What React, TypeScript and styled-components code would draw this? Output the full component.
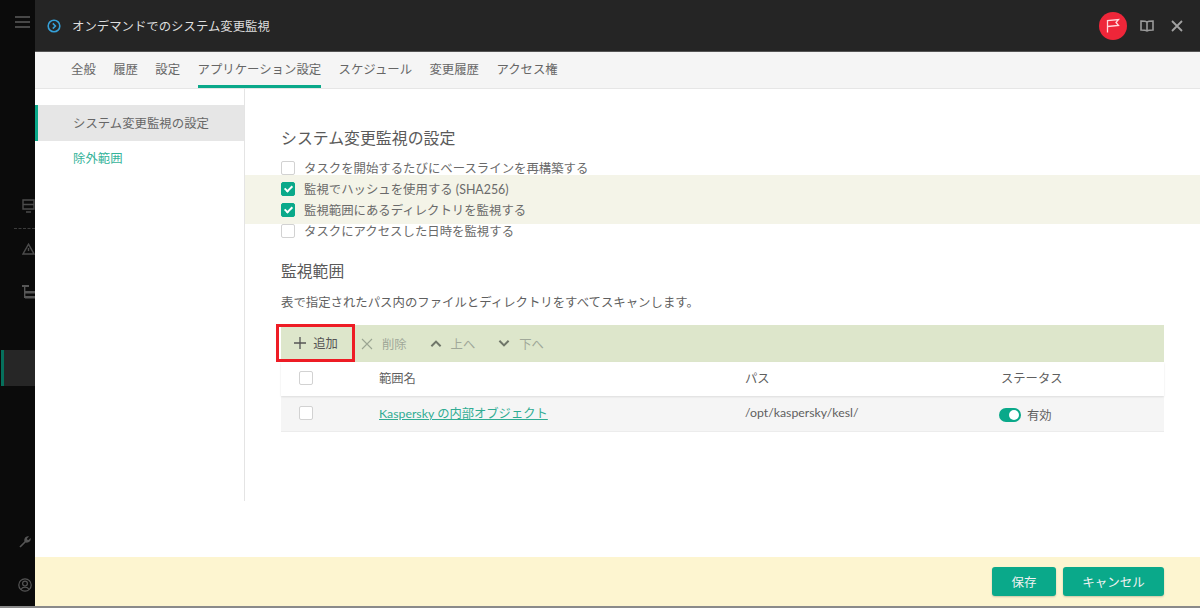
import styled, { createGlobalStyle } from 'styled-components';

const GlobalStyle = createGlobalStyle`
  html, body { margin: 0; padding: 0; height: 100%; background: #fff; overflow: hidden; }
  body { font-family: "Lato", "Noto Sans CJK JP", sans-serif; font-size: 12.4px; color: #5f5f5f; }
  #root { height: 100%; }
`;

const tabs = ['全般', '履歴', '設定', 'アプリケーション設定', 'スケジュール', '変更履歴', 'アクセス権'];

const options = [
  { label: 'タスクを開始するたびにベースラインを再構築する', on: false },
  { label: '監視でハッシュを使用する (SHA256)', on: true },
  { label: '監視範囲にあるディレクトリを監視する', on: true },
  { label: 'タスクにアクセスした日時を監視する', on: false },
];

const App = () => {
  return (
    <Shell>
      <GlobalStyle />
      <Rail>
        <RailIcon top={15} left={15}>
          <svg width="15" height="14" viewBox="0 0 15 14" fill="none" stroke="#5c5c5c" strokeWidth="1.5">
            <path d="M0 2h15M0 7h15M0 12h15" />
          </svg>
        </RailIcon>
        <RailIcon top={170} left={22}>
          <svg width="13" height="14" viewBox="0 0 13 14" fill="none" stroke="#4c4c4c" strokeWidth="1.4">
            <path d="M1 1h11v9H1zM1 5.500h11M4 13h5" />
          </svg>
        </RailIcon>
        <RailDivider />
        <RailIcon top={14} left={22}>
          <svg width="13" height="12" viewBox="0 0 13 12" fill="none" stroke="#4c4c4c" strokeWidth="1.4">
            <path d="M6.500 1.200 12 11H1zM6.500 5v3" />
          </svg>
        </RailIcon>
        <RailIcon top={30} left={22}>
          <svg width="13" height="14" viewBox="0 0 13 14" fill="#565656">
            <path d="M0 0h7v2H0zM2 2h1.400v11H2zM3 6h10v2.400H3zM3 11h10v2.400H3z" />
          </svg>
        </RailIcon>
        <RailActive />
        <RailSpacer />
        <RailIcon top={0} left={19}>
          <svg width="12" height="12" viewBox="0 0 12 12" fill="#555">
            <path d="M1.600 11.600.4 10.400l5-5C5 3.600 5.500 2 6.800 1 7.800.3 9 .1 10 .5L8 2.500 8.300 3.700 9.500 4 11.500 2c.4 1 .2 2.200-.6 3.200-1 1.200-2.600 1.700-4.300 1.300z" />
          </svg>
        </RailIcon>
        <RailIcon top={30} left={18}>
          <svg width="14" height="14" viewBox="0 0 14 14" fill="none" stroke="#555" strokeWidth="1.200">
            <circle cx="7" cy="7" r="6.200" />
            <circle cx="7" cy="5.600" r="2.400" />
            <path d="M2.900 11.500C3.800 9.800 5.200 9.200 7 9.200s3.200.6 4.100 2.300" />
          </svg>
        </RailIcon>
      </Rail>
      <Panel>
        <Header>
          <svg width="14" height="14" viewBox="0 0 14 14" fill="none" stroke="#35a0d8" strokeWidth="1.600">
            <circle cx="7" cy="7" r="5.800" />
            <path d="M5.800 4.400 8.400 7 5.800 9.600" />
          </svg>
          <HeaderTitle>オンデマンドでのシステム変更監視</HeaderTitle>
          <HeaderActions>
            <FlagBadge>
              <svg width="14" height="15" viewBox="0 0 14 15" fill="none" stroke="#ffd9dd" strokeWidth="1.300">
                <path d="M1.500 14.500V2.500L12.500 1.500 10 4.500l2.500 3-11 1" />
              </svg>
            </FlagBadge>
            <BookIcon>
              <svg width="14" height="12" viewBox="0 0 14 12" fill="none" stroke="#9a9a9a" strokeWidth="1.600">
                <path d="M7 2.200C6 1.200 4 1 1 1v9c3 0 5 .2 6 1 1-.8 3-1 6-1V1C10 1 8 1.200 7 2.200zM7 2.200V11" />
              </svg>
            </BookIcon>
            <svg width="12" height="12" viewBox="0 0 12 12" fill="none" stroke="#a2a2a2" strokeWidth="1.800">
              <path d="M1 1l10 10M11 1 1 11" />
            </svg>
          </HeaderActions>
        </Header>
        <TabBar>
          {tabs.map((tab) => (
            <Tab key={tab} active={tab === 'アプリケーション設定'}>{tab}</Tab>
          ))}
        </TabBar>
        <Body>
          <SideNav>
            <SideItem active>システム変更監視の設定</SideItem>
            <SideItem>除外範囲</SideItem>
          </SideNav>
          <Main>
            <SectionTitle>システム変更監視の設定</SectionTitle>
            <OptionList>
              <OptionRow>
                <Check />
                <span>{options[0].label}</span>
              </OptionRow>
              <OptionBand>
                {options.slice(1, 3).map((option) => (
                  <OptionRow key={option.label}>
                    <Check checked={option.on} />
                    <span>{option.label}</span>
                  </OptionRow>
                ))}
              </OptionBand>
              <OptionRow>
                <Check />
                <span>{options[3].label}</span>
              </OptionRow>
            </OptionList>
            <ScopeTitle>監視範囲</ScopeTitle>
            <Description>表で指定されたパス内のファイルとディレクトリをすべてスキャンします。</Description>
            <Toolbar>
              <AddButton>
                <svg width="14" height="14" viewBox="0 0 14 14" fill="none" stroke="#555" strokeWidth="1.300">
                  <path d="M7 1v12M1 7h12" />
                </svg>
                追加
              </AddButton>
              <ToolButton>
                <svg width="12" height="12" viewBox="0 0 12 12" fill="none" stroke="#9ba592" strokeWidth="1.100">
                  <path d="M1 1l10 10M11 1 1 11" />
                </svg>
                削除
              </ToolButton>
              <ToolButton>
                <svg width="12" height="9" viewBox="0 0 13 9" fill="none" stroke="#6f7669" strokeWidth="2.200">
                  <path d="M1.500 7.500 6.500 2.500l5 5" />
                </svg>
                上へ
              </ToolButton>
              <ToolButton>
                <svg width="12" height="9" viewBox="0 0 13 9" fill="none" stroke="#6f7669" strokeWidth="2.200">
                  <path d="M1.500 1.500 6.500 6.500l5-5" />
                </svg>
                下へ
              </ToolButton>
            </Toolbar>
            <Table>
              <HeadRow>
                <CheckCell><Check /></CheckCell>
                <span>範囲名</span>
                <span>パス</span>
                <span>ステータス</span>
              </HeadRow>
              <BodyRow>
                <CheckCell><Check /></CheckCell>
                <ScopeLink>Kaspersky の内部オブジェクト</ScopeLink>
                <span>/opt/kaspersky/kesl/</span>
                <Status>
                  <Toggle />
                  有効
                </Status>
              </BodyRow>
            </Table>
          </Main>
        </Body>
        <Footer>
          <PrimaryButton wide={false}>保存</PrimaryButton>
          <PrimaryButton wide>キャンセル</PrimaryButton>
        </Footer>
      </Panel>
    </Shell>
  );
};

export default App;

const Shell = styled.div`
  display: flex;
  height: 608px;
  width: 1200px;
  border-bottom: 2px solid #8a8a8a;
  box-sizing: border-box;
`;

const Rail = styled.aside`
  width: 35px;
  flex: none;
  background: #0b0b0b;
  display: flex;
  flex-direction: column;
  overflow: hidden;
  padding-bottom: 14px;
  box-sizing: border-box;
`;

const RailIcon = styled.div<{ top: number; left: number }>`
  margin-top: ${({ top }) => top}px;
  margin-left: ${({ left }) => left}px;
  display: flex;
  line-height: 0;
`;

const RailDivider = styled.div`
  margin: 15px 0 0 14px;
  border-top: 1px dashed #3c3c3c;
`;

const RailActive = styled.div`
  margin-top: 51px;
  height: 36px;
  background: #262626;
  border-left: 3px solid #06705c;
  margin-left: 1px;
`;

const RailSpacer = styled.div`
  flex: 1;
`;

const Panel = styled.div`
  flex: 1;
  min-width: 0;
  display: flex;
  flex-direction: column;
`;

const Header = styled.header`
  height: 52px;
  flex: none;
  background: #252525;
  border-bottom: 1px solid #555;
  box-sizing: border-box;
  display: flex;
  align-items: center;
  padding: 0 17px 0 12px;
`;

const HeaderTitle = styled.h1`
  margin: 0 0 0 11px;
  font-size: 12.4px;
  font-weight: 400;
  color: #dedede;
`;

const HeaderActions = styled.div`
  margin-left: auto;
  display: flex;
  align-items: center;
  gap: 17px;
`;

const FlagBadge = styled.div`
  width: 28px;
  height: 28px;
  border-radius: 50%;
  background: #ee2639;
  display: flex;
  align-items: center;
  justify-content: center;
`;

const BookIcon = styled.span`
  display: flex;
  margin-left: -4px;
`;

const TabBar = styled.nav`
  height: 37px;
  flex: none;
  background: #f5f5f5;
  border-bottom: 1px solid #e6e6e6;
  box-sizing: border-box;
  display: flex;
  gap: 17.400px;
  padding-left: 36px;
`;

const Tab = styled.div<{ active?: boolean }>`
  display: flex;
  align-items: center;
  height: 36px;
  box-sizing: border-box;
  padding-top: 1px;
  color: #666;
  border-bottom: 3px solid ${({ active }) => (active ? '#0aa98a' : 'transparent')};
`;

const Body = styled.div`
  flex: 1;
  min-height: 0;
  display: flex;
  align-items: flex-start;
`;

const SideNav = styled.div`
  width: 210px;
  height: 412px;
  flex: none;
  box-sizing: border-box;
  padding-top: 16px;
  border-right: 1px solid #e4e4e4;
`;

const SideItem = styled.div<{ active?: boolean }>`
  height: ${({ active }) => (active ? '36px' : '33px')};
  box-sizing: border-box;
  display: flex;
  align-items: center;
  padding-left: ${({ active }) => (active ? '35px' : '38px')};
  background: ${({ active }) => (active ? '#e6e6e6' : 'transparent')};
  border-left: ${({ active }) => (active ? '3px solid #0aa98a' : 'none')};
  color: ${({ active }) => (active ? '#666' : '#35b39a')};
`;

const Main = styled.main`
  flex: 1;
  min-width: 0;
  padding: 36px 36px 0;
`;

const SectionTitle = styled.h2`
  margin: 0;
  height: 26px;
  line-height: 26px;
  font-size: 15.900px;
  font-weight: 400;
  color: #5a5a5a;
`;

const OptionList = styled.div`
  margin-top: 6px;
`;

const OptionBand = styled.div`
  margin: -3.500px -36px;
  padding: 0 36px;
  background: #f4f4e8;
  height: 49px;
  display: flex;
  flex-direction: column;
  justify-content: center;
`;

const OptionRow = styled.div`
  height: 21px;
  display: flex;
  align-items: center;
  gap: 9px;
  color: #6a6a6a;
`;

const Check = styled.span<{ checked?: boolean }>`
  width: 14px;
  height: 14px;
  flex: none;
  border-radius: 2px;
  box-sizing: border-box;
  border: 1.5px solid ${({ checked }) => (checked ? '#0aa98a' : '#d2d2d2')};
  background: ${({ checked }) => (checked ? '#0aa98a' : '#fff')};
  position: relative;
  &::after {
    content: '';
    display: ${({ checked }) => (checked ? 'block' : 'none')};
    position: absolute;
    left: 3.500px;
    top: 1px;
    width: 3px;
    height: 6px;
    border: solid #fff;
    border-width: 0 2px 2px 0;
    transform: rotate(45deg);
  }
`;

const ScopeTitle = styled.h3`
  margin: 18px 0 0;
  height: 24px;
  line-height: 24px;
  font-size: 15.800px;
  font-weight: 400;
  color: #5a5a5a;
`;

const Description = styled.p`
  margin: 10px 0 0;
  height: 20px;
  line-height: 20px;
  color: #5f5f5f;
  font-size: 12.400px;
`;

const Toolbar = styled.div`
  margin: 12px 0 0;
  height: 37px;
  background: #dde6cb;
  display: flex;
  align-items: center;
  font-size: 12.300px;
`;

const AddButton = styled.div`
  margin: -1px 0 0 -5px;
  width: 79px;
  height: 38px;
  box-sizing: border-box;
  border: 3px solid #ee1c25;
  display: flex;
  align-items: center;
  justify-content: center;
  gap: 6px;
  color: #555;
`;

const ToolButton = styled.div`
  margin-left: 6px;
  padding: 0 8px 0 0;
  display: flex;
  align-items: center;
  gap: 9px;
  color: #a0a899;
  & + & {
    margin-left: 15px;
  }
`;

const Table = styled.div`
  font-size: 12.300px;
`;

const HeadRow = styled.div`
  height: 34px;
  padding-bottom: 2px;
  box-sizing: border-box;
  display: grid;
  grid-template-columns: 98px 366px 256px 1fr;
  align-items: center;
  background: #fff;
  box-shadow: 0 1px 2px rgba(0, 0, 0, 0.1);
  position: relative;
  color: #5f5f5f;
`;

const BodyRow = styled.div`
  height: 36px;
  padding-bottom: 2px;
  display: grid;
  grid-template-columns: 98px 366px 256px 1fr;
  align-items: center;
  background: #f5f5f5;
  border-bottom: 1px solid #ececec;
  box-sizing: border-box;
`;

const CheckCell = styled.div`
  padding-left: 18px;
  display: flex;
`;

const ScopeLink = styled.a`
  color: #30ac93;
  text-decoration: underline;
`;

const Status = styled.div`
  display: flex;
  align-items: center;
  gap: 6px;
  padding-top: 4px;
  margin-left: -2px;
`;

const Toggle = styled.span`
  width: 22px;
  height: 14px;
  border-radius: 7px;
  background: #0aa98a;
  position: relative;
  &::after {
    content: '';
    position: absolute;
    right: 2px;
    top: 2px;
    width: 10px;
    height: 10px;
    border-radius: 50%;
    background: #fff;
  }
`;

const Footer = styled.footer`
  height: 49px;
  flex: none;
  background: #fdf5d0;
  display: flex;
  align-items: center;
  justify-content: flex-end;
  gap: 7px;
  padding-right: 36px;
`;

const PrimaryButton = styled.button<{ wide: boolean }>`
  width: ${({ wide }) => (wide ? '101px' : '64px')};
  height: 29px;
  border: none;
  border-radius: 3px;
  background: #0aa98a;
  box-shadow: 0 1px 2px rgba(0, 0, 0, 0.2);
  color: #f2f2f2;
  font: inherit;
  font-size: 12.500px;
`;
